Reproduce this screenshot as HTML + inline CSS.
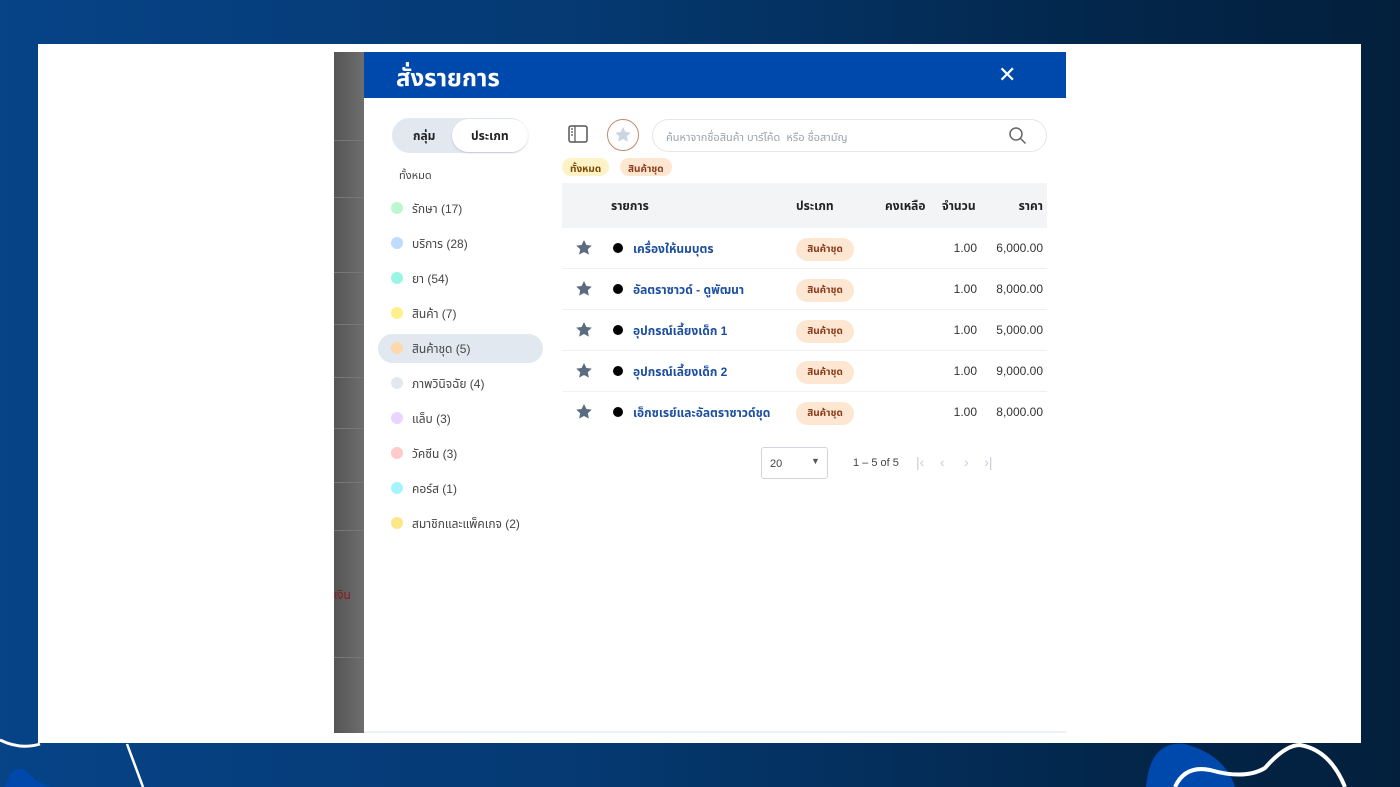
<!DOCTYPE html>
<html><head><meta charset="utf-8"><style>
*{margin:0;padding:0;box-sizing:border-box}
body{width:1400px;height:787px;overflow:hidden;position:relative;font-family:"Liberation Sans","Noto Sans Thai","Loma",sans-serif;background:linear-gradient(90deg,#064387 0%,#053a73 40%,#03264a 80%,#031f3c 100%)}
.card{position:absolute;left:38px;top:44px;width:1323px;height:699px;background:#fff}
.strip{position:absolute;left:334px;top:52px;width:30px;height:681px;background:linear-gradient(90deg,#555,#6e6e6e)}
.strip i{position:absolute;left:0;width:30px;height:1px;background:#777}
.modal{position:absolute;left:364px;top:52px;width:702px;height:681px;background:#fff;border-bottom:2px solid #eef1f5}
.hd{height:46px;background:#0049ac;color:#fff;position:relative}
.hd h1{position:absolute;left:32px;top:9px;font-size:24px;font-weight:bold}
.hd .x{position:absolute;left:634px;top:10px;font-size:22px}
.tog{position:absolute;left:28px;top:66px;width:136px;height:35px;border-radius:18px;background:#e2e8f0;border:1px solid #e2e8f0}
.tog span{position:absolute;top:9px;font-size:12px;font-weight:bold;color:#222}
.tog .on{position:absolute;left:59px;top:0;width:76px;height:33px;border-radius:17px;background:#fff;box-shadow:0 1px 2px rgba(0,0,0,.15)}
.all{position:absolute;left:35px;top:115px;font-size:11px;color:#444}
.cat{position:absolute;left:14px;width:165px;height:29px;border-radius:15px;font-size:12px;color:#444}
.cat b{position:absolute;left:13px;top:8px;width:12px;height:12px;border-radius:50%}
.cat span{position:absolute;left:34px;top:7px}
.sel{background:#e2e8f0}
.ico{position:absolute;left:204px;top:73px}
.starc{position:absolute;left:243px;top:67px;width:32px;height:32px;border-radius:50%;border:1.5px solid #c28a6e}
.search{position:absolute;left:288px;top:67px;width:395px;height:33px;border:1.5px solid #e5e7eb;border-radius:17px;font-size:11px;color:#9aa3ae}
.search span{position:absolute;left:13px;top:9px}
.chip{position:absolute;top:106px;height:18px;border-radius:9px;font-size:10px;font-weight:bold;padding:3px 8px}
.th{position:absolute;left:198px;top:131px;width:485px;height:45px;background:#f3f4f6;font-size:12px;font-weight:bold;color:#222}
.th span{position:absolute;top:15px}
.row{position:absolute;left:198px;width:485px;height:41px;border-bottom:1.5px solid #eef0f3;font-size:12px}
.row .st{position:absolute;left:13px;top:11px}
.row .dot{position:absolute;left:51px;top:15px;width:10px;height:10px;border-radius:50%;background:#000}
.row .nm{position:absolute;left:71px;top:13px;color:#1c4fa0;font-weight:bold}
.row .tg{position:absolute;left:234px;top:10px;height:23px;width:58px;border-radius:12px;background:#fde6d2;color:#8a3b1a;font-size:10px;font-weight:bold;text-align:center;line-height:23px}
.row .q{position:absolute;right:70px;top:13px;color:#333}
.row .p{position:absolute;right:4px;top:13px;color:#333}
.pg{position:absolute;left:397px;top:395px;width:67px;height:32px;border:1px solid #d1d5db;border-radius:3px;font-size:11px;color:#444}
</style></head><body>
<svg style="position:absolute;left:0;top:730px" width="1400" height="57"><path d="M0 10 Q20 20 40 14" stroke="#fff" stroke-width="3" fill="none"/><path d="M5 57 Q15 25 35 50 L50 57Z" fill="#0049ac"/><path d="M127 14 L143 57" stroke="#fff" stroke-width="2.5"/><path d="M1146 57 Q1150 10 1185 14 Q1225 25 1235 57Z" fill="#0049ac"/><path d="M1175 57 Q1185 35 1210 40 Q1245 50 1265 38 Q1285 15 1300 15 Q1330 20 1345 57" stroke="#fff" stroke-width="4" fill="none"/></svg>
<div class="card"></div>
<div class="strip"><i style="top:88px"></i><i style="top:145px"></i><i style="top:220px"></i><i style="top:272px"></i><i style="top:325px"></i><i style="top:376px"></i><i style="top:430px"></i><i style="top:478px"></i><i style="top:605px"></i><span style="position:absolute;left:0;top:535px;color:#8b1a1a;font-size:12px">เงิน</span></div>
<div class="modal">
<div class="hd"><h1>สั่งรายการ</h1><div class="x">✕</div></div>
<div class="tog"><div class="on"></div><span style="left:20px">กลุ่ม</span><span style="left:78px">ประเภท</span></div>
<div class="all">ทั้งหมด</div>
<div class="cat" style="top:142px"><b style="background:#bbf7d0"></b><span>รักษา (17)</span></div>
<div class="cat" style="top:177px"><b style="background:#bfdbfe"></b><span>บริการ (28)</span></div>
<div class="cat" style="top:212px"><b style="background:#99f6e4"></b><span>ยา (54)</span></div>
<div class="cat" style="top:247px"><b style="background:#fef08a"></b><span>สินค้า (7)</span></div>
<div class="cat sel" style="top:282px"><b style="background:#fed7aa"></b><span>สินค้าชุด (5)</span></div>
<div class="cat" style="top:317px"><b style="background:#e2e8f0"></b><span>ภาพวินิจฉัย (4)</span></div>
<div class="cat" style="top:352px"><b style="background:#e9d5ff"></b><span>แล็บ (3)</span></div>
<div class="cat" style="top:387px"><b style="background:#fecaca"></b><span>วัคซีน (3)</span></div>
<div class="cat" style="top:422px"><b style="background:#a5f3fc"></b><span>คอร์ส (1)</span></div>
<div class="cat" style="top:457px"><b style="background:#fde68a"></b><span>สมาชิกและแพ็คเกจ (2)</span></div>
<svg class="ico" width="20" height="18"><rect x="1" y="1" width="18" height="16" rx="2" fill="none" stroke="#555" stroke-width="1.5"/><path d="M7 1v16M3 4h2M3 7h2M3 10h2" stroke="#555" stroke-width="1.2"/></svg>
<div class="starc"><svg width="30" height="30" style="position:absolute;left:0;top:0"><path d="M15 7l2.4 5 5.4.6-4 3.7 1.1 5.3L15 19l-4.9 2.6 1.1-5.3-4-3.7 5.4-.6z" fill="#cbd5e1"/></svg></div>
<div class="search"><span>ค้นหาจากชื่อสินค้า บาร์โค้ด &nbsp;หรือ ชื่อสามัญ</span><svg width="20" height="20" style="position:absolute;right:18px;top:6px"><circle cx="8" cy="8" r="6" fill="none" stroke="#666" stroke-width="1.5"/><path d="M12.5 12.5l5 5" stroke="#666" stroke-width="1.5"/></svg></div>
<div class="chip" style="left:198px;background:#fef3c7;color:#7c4a03">ทั้งหมด</div>
<div class="chip" style="left:256px;background:#fde6d2;color:#8a3b1a">สินค้าชุด</div>
<div class="th"><span style="left:49px">รายการ</span><span style="left:234px">ประเภท</span><span style="left:323px">คงเหลือ</span><span style="left:380px">จำนวน</span><span style="right:4px">ราคา</span></div>
<div class="row" style="top:176px"><svg class="st" width="18" height="18"><path d="M9 1l2.4 5 5.4.6-4 3.7 1.1 5.3L9 13l-4.9 2.6 1.1-5.3-4-3.7 5.4-.6z" fill="#5b6b80"/></svg><i class="dot"></i><span class="nm">เครื่องให้นมบุตร</span><span class="tg">สินค้าชุด</span><span class="q">1.00</span><span class="p">6,000.00</span></div>
<div class="row" style="top:217px"><svg class="st" width="18" height="18"><path d="M9 1l2.4 5 5.4.6-4 3.7 1.1 5.3L9 13l-4.9 2.6 1.1-5.3-4-3.7 5.4-.6z" fill="#5b6b80"/></svg><i class="dot"></i><span class="nm">อัลตราซาวด์ - ดูพัฒนา</span><span class="tg">สินค้าชุด</span><span class="q">1.00</span><span class="p">8,000.00</span></div>
<div class="row" style="top:258px"><svg class="st" width="18" height="18"><path d="M9 1l2.4 5 5.4.6-4 3.7 1.1 5.3L9 13l-4.9 2.6 1.1-5.3-4-3.7 5.4-.6z" fill="#5b6b80"/></svg><i class="dot"></i><span class="nm">อุปกรณ์เลี้ยงเด็ก 1</span><span class="tg">สินค้าชุด</span><span class="q">1.00</span><span class="p">5,000.00</span></div>
<div class="row" style="top:299px"><svg class="st" width="18" height="18"><path d="M9 1l2.4 5 5.4.6-4 3.7 1.1 5.3L9 13l-4.9 2.6 1.1-5.3-4-3.7 5.4-.6z" fill="#5b6b80"/></svg><i class="dot"></i><span class="nm">อุปกรณ์เลี้ยงเด็ก 2</span><span class="tg">สินค้าชุด</span><span class="q">1.00</span><span class="p">9,000.00</span></div>
<div class="row" style="top:340px;border-bottom:none"><svg class="st" width="18" height="18"><path d="M9 1l2.4 5 5.4.6-4 3.7 1.1 5.3L9 13l-4.9 2.6 1.1-5.3-4-3.7 5.4-.6z" fill="#5b6b80"/></svg><i class="dot"></i><span class="nm">เอ็กซเรย์และอัลตราซาวด์ชุด</span><span class="tg">สินค้าชุด</span><span class="q">1.00</span><span class="p">8,000.00</span></div>
<div class="pg"><span style="position:absolute;left:8px;top:10px">20</span><span style="position:absolute;left:49px;top:8px;font-size:9px;color:#555">▼</span></div>
<div style="position:absolute;left:489px;top:405px;font-size:11px;color:#444">1 – 5 of 5</div>
<div style="position:absolute;left:552px;top:402px;font-size:14px;color:#c7ccd3;letter-spacing:0">|‹ &nbsp;&nbsp; ‹ &nbsp;&nbsp;&nbsp; › &nbsp;&nbsp;&nbsp;›|</div>
</div>
</body></html>
